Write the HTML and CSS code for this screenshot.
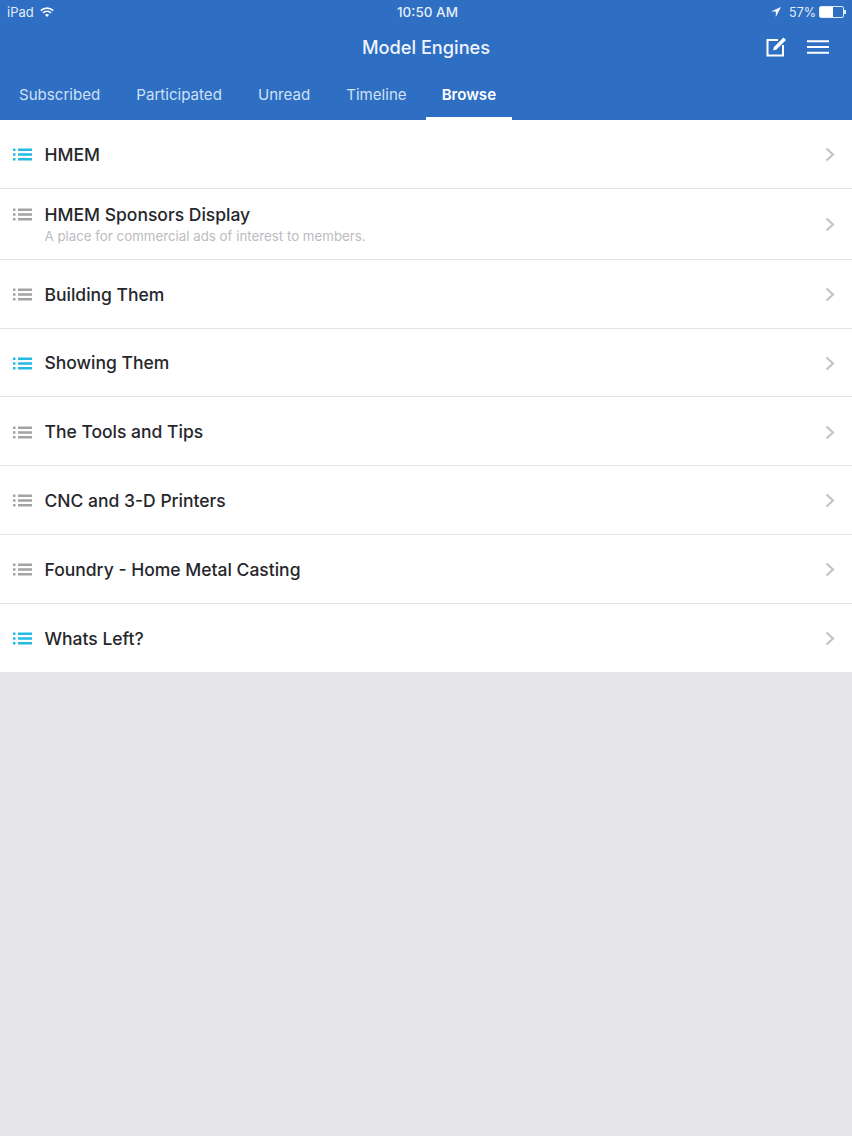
FILE: index.html
```html
<!DOCTYPE html>
<html lang="en">
<head>
    <meta charset="UTF-8">
    <meta name="viewport" content="width=device-width, initial-scale=1.0">
    <title>Model Engines</title>
    <link rel="stylesheet" href="styles.css">
</head>
<body>
    <header class="header">
        <div class="status-bar">
            <div class="status-left">
                <span>iPad</span>
                <svg class="wifi" width="14" height="10" viewBox="0 0 14 10">
                    <path d="M.8 3.600C4.300.3 9.700.3 13.200 3.600" fill="none" stroke="#fff" stroke-width="1.700"/>
                    <path d="M3 5.900c2.300-2 5.700-2 8 0" fill="none" stroke="#fff" stroke-width="1.700"/>
                    <path d="M7 10 4.900 7.800c1.200-1 3-1 4.200 0z" fill="#fff"/>
                </svg>
            </div>
            <div class="status-time">10:50 AM</div>
            <div class="status-right">
                <svg width="10" height="10" viewBox="0 0 10 10"><path d="M10 0 0 4.600h4.800V10z" fill="#fff"/></svg>
                <span class="status-battery-text">57%</span>
                <span class="battery"><span class="battery-level"></span></span>
            </div>
        </div>
        <div class="title-bar">
            <h1 class="title">Model Engines</h1>
            <div class="actions">
                <svg width="22" height="21" viewBox="0 0 22 21">
                    <path d="M12 4H1.500v15.500H17V9" fill="none" stroke="#fff" stroke-width="2"/>
                    <path d="M7 14.500 8 11 17.500 1.500 20 4 10.500 13.500z" fill="#fff"/>
                </svg>
                <svg width="22" height="14" viewBox="0 0 22 14">
                    <path d="M0 1.200h22M0 7h22M0 12.800h22" stroke="#fff" stroke-width="2"/>
                </svg>
            </div>
        </div>
        <nav class="tabs">
            <a class="tab">Subscribed</a>
            <a class="tab">Participated</a>
            <a class="tab">Unread</a>
            <a class="tab">Timeline</a>
            <a class="tab active">Browse</a>
        </nav>
    </header>

    <svg class="icon-defs" width="0" height="0">
        <symbol id="list-icon" viewBox="0 0 19 13">
            <path d="M0 .5h2.500v2.500H0zM0 5.200h2.500v2.500H0zM0 9.900h2.500v2.500H0zM5 .5h14v2.500H5zM5 5.200h14v2.500H5zM5 9.900h14v2.500H5z"/>
        </symbol>
        <symbol id="chevron" viewBox="0 0 10 15">
            <path d="M1.500 1.500 8 7.500 1.500 13.500" fill="none" stroke="currentColor" stroke-width="2.200"/>
        </symbol>
    </svg>

    <ul class="forum-list">
        <li class="forum">
            <svg class="list-icon unread"><use href="#list-icon"/></svg>
            <div class="forum-text"><div class="forum-name">HMEM</div></div>
            <svg class="chevron"><use href="#chevron"/></svg>
        </li>
        <li class="forum forum-tall">
            <svg class="list-icon"><use href="#list-icon"/></svg>
            <div class="forum-text">
                <div class="forum-name">HMEM Sponsors Display</div>
                <div class="forum-desc">A place for commercial ads of interest to members.</div>
            </div>
            <svg class="chevron"><use href="#chevron"/></svg>
        </li>
        <li class="forum">
            <svg class="list-icon"><use href="#list-icon"/></svg>
            <div class="forum-text"><div class="forum-name">Building Them</div></div>
            <svg class="chevron"><use href="#chevron"/></svg>
        </li>
        <li class="forum">
            <svg class="list-icon unread"><use href="#list-icon"/></svg>
            <div class="forum-text"><div class="forum-name">Showing Them</div></div>
            <svg class="chevron"><use href="#chevron"/></svg>
        </li>
        <li class="forum">
            <svg class="list-icon"><use href="#list-icon"/></svg>
            <div class="forum-text"><div class="forum-name">The Tools and Tips</div></div>
            <svg class="chevron"><use href="#chevron"/></svg>
        </li>
        <li class="forum">
            <svg class="list-icon"><use href="#list-icon"/></svg>
            <div class="forum-text"><div class="forum-name">CNC and 3-D Printers</div></div>
            <svg class="chevron"><use href="#chevron"/></svg>
        </li>
        <li class="forum">
            <svg class="list-icon"><use href="#list-icon"/></svg>
            <div class="forum-text"><div class="forum-name">Foundry - Home Metal Casting</div></div>
            <svg class="chevron"><use href="#chevron"/></svg>
        </li>
        <li class="forum">
            <svg class="list-icon unread"><use href="#list-icon"/></svg>
            <div class="forum-text"><div class="forum-name">Whats Left?</div></div>
            <svg class="chevron"><use href="#chevron"/></svg>
        </li>
    </ul>
</body>
</html>
```

FILE: styles.css
```css
html, body {
    margin: 0;
    height: 1136px;
    overflow: hidden;
}

body {
    background-color: #e6e5e7;
    font-family: "Inter", "Liberation Sans", sans-serif;
    color: #26272b;
}

.header {
    height: 120px;
    background-color: #2e6ec3;
    color: #fff;
    box-sizing: border-box;
}

.status-bar {
    height: 24px;
    padding: 0 6px 0 7px;
    display: grid;
    grid-template-columns: 1fr auto 1fr;
    align-items: center;
    font-size: 13px;
    color: #e3edf9;
}

.status-left {
    display: flex;
    align-items: center;
    gap: 6px;
}

.status-right {
    display: flex;
    align-items: center;
    justify-content: flex-end;
    gap: 5px;
}

.status-battery-text {
    font-size: 12.500px;
    margin-left: 3px;
    margin-right: -2px;
}

.status-time {
    font-weight: 500;
    font-size: 13.500px;
    padding-left: 2px;
}

.battery {
    width: 23px;
    height: 10px;
    border: 1px solid #e3edf9;
    border-radius: 2px;
    margin-right: 2px;
    position: relative;
}

.battery::after {
    content: "";
    position: absolute;
    right: -3px;
    top: 3px;
    width: 2px;
    height: 4px;
    background-color: #e3edf9;
}

.battery-level {
    display: block;
    width: 57%;
    height: 100%;
    background-color: #fff;
}

.title-bar {
    height: 46px;
    position: relative;
    display: flex;
    align-items: center;
    justify-content: center;
}

.title {
    margin: 0;
    font-size: 18.200px;
    font-weight: 500;
    color: #eef4fc;
    padding-bottom: 1px;
}

.actions {
    position: absolute;
    right: 23px;
    top: 12px;
    display: flex;
    align-items: center;
    gap: 19px;
}

.tabs {
    height: 50px;
    display: flex;
    gap: 4px;
    padding-left: 3px;
}

.tab {
    padding: 0 16px;
    height: 50px;
    line-height: 50px;
    box-sizing: border-box;
    font-size: 15.100px;
    color: #cfe0f5;
}

.tab.active {
    color: #fff;
    font-weight: 600;
    margin-left: -1px;
    border-bottom: 3px solid #fff;
}

.icon-defs {
    position: absolute;
}

.forum-list {
    margin: 0;
    padding: 0;
    list-style: none;
    background-color: #fff;
}

.forum {
    height: 68.750px;
    box-sizing: border-box;
    display: flex;
    align-items: center;
    padding: 2px 17px 0 13px;
    border-bottom: 1px solid #e4e3e7;
}

.forum:last-child {
    border-bottom: none;
}

.forum-tall {
    height: 71px;
}

.list-icon {
    width: 19px;
    height: 13px;
    flex: none;
    fill: #a3a3a6;
}

.list-icon.unread {
    fill: #23bbe6;
}

.forum-tall .list-icon {
    margin-bottom: 20px;
}

.forum-text {
    flex: 1;
    margin-left: 12.500px;
}

.forum-name {
    font-size: 17.500px;
    font-weight: 500;
    line-height: 22px;
}

.forum-desc {
    font-size: 13.300px;
    line-height: 20px;
    color: #bcbcc0;
}

.chevron {
    width: 10px;
    height: 15px;
    flex: none;
    color: #c4c4c7;
}
```
